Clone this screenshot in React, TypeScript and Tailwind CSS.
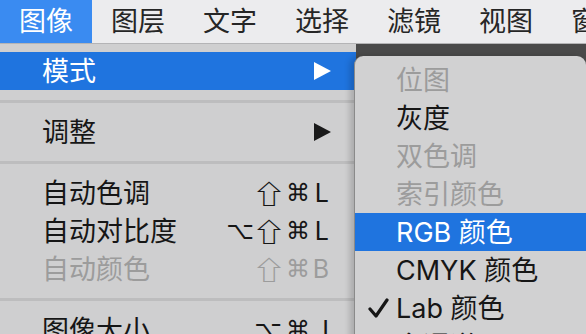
import React from 'react';

const cjk = "font-['Inter','Noto_Sans_CJK_SC',sans-serif]";
const sym = "font-['DejaVu_Sans','Noto_Sans_CJK_SC',sans-serif]";

const menuBar = ['图像', '图层', '文字', '选择', '滤镜', '视图', '窗口'];

type Item =
  | { type: 'sep' }
  | { type: 'item'; label: string; keys?: string[]; disabled?: boolean; active?: boolean; submenu?: boolean };

const mainItems: Item[] = [
  { type: 'item', label: '模式', submenu: true, active: true },
  { type: 'sep' },
  { type: 'item', label: '调整', submenu: true },
  { type: 'sep' },
  { type: 'item', label: '自动色调', keys: ['⇧', '⌘', 'L'] },
  { type: 'item', label: '自动对比度', keys: ['⌥', '⇧', '⌘', 'L'] },
  { type: 'item', label: '自动颜色', keys: ['⇧', '⌘', 'B'], disabled: true },
  { type: 'sep' },
  { type: 'item', label: '图像大小', keys: ['⌥', '⌘', 'I'] },
];

const modeItems = [
  { label: '位图', disabled: true },
  { label: '灰度' },
  { label: '双色调', disabled: true },
  { label: '索引颜色', disabled: true },
  { label: 'RGB 颜色', active: true },
  { label: 'CMYK 颜色' },
  { label: 'Lab 颜色', checked: true },
  { label: '多通道' },
];

function Arrow({ white }: { white?: boolean }) {
  return (
    <svg width="17" height="18" viewBox="0 0 17 18">
      <polygon points="0,0 17,9 0,18" fill={white ? '#ffffff' : '#1a1a1a'} />
    </svg>
  );
}

function Keys({ keys, disabled }: { keys: string[]; disabled?: boolean }) {
  return (
    <div className={`flex items-center leading-none ${sym} ${disabled ? 'text-[#9c9c9c]' : 'text-[#161616]'}`}>
      {keys.map((k, i) =>
        k === '⇧' ? (
          <span key={i} className="w-[28px] flex justify-center">
            <span className="inline-block scale-x-[1.35] text-[26px] font-['Noto_Sans_CJK_SC','DejaVu_Sans',sans-serif]">
              ⇧
            </span>
          </span>
        ) : k === '⌥' ? (
          <span key={i} className="w-[30px] text-center text-[24px]">⌥</span>
        ) : k === '⌘' ? (
          <span key={i} className="w-[24px] ml-[3px] text-center text-[24px]">⌘</span>
        ) : (
          <span key={i} className="w-[19px] text-right font-['Inter',sans-serif] text-[25px]">{k}</span>
        )
      )}
    </div>
  );
}

export default function App() {
  return (
    <div className={`relative w-[586px] h-[334px] overflow-hidden bg-[#4a4a4a] ${cjk}`}>
      {/* menu bar */}
      <div className="flex h-[44px] bg-[#ececee] border-b border-[#b4b4b6] whitespace-nowrap">
        {menuBar.map((m, i) => (
          <div
            key={m}
            className={`flex items-center px-[19px] text-[27px] leading-none ${
              i === 0 ? 'bg-[#3a8bf1] text-white' : 'text-[#262626]'
            }`}
          >
            {m}
          </div>
        ))}
      </div>

      {/* image menu */}
      <div className="absolute top-[44px] left-0 w-[356px] h-[300px] bg-[#cfcfd0] pt-[8px]">
        {mainItems.map((it, i) =>
          it.type === 'sep' ? (
            <div key={i} className="pt-[10px] pb-[10px]">
              <div className="h-[3px] bg-[#bdbdbe]" />
            </div>
          ) : (
            <div
              key={i}
              className={`flex items-center h-[38px] pl-[42px] pr-[27px] text-[27px] leading-none ${
                it.active ? 'bg-[#1f74df] text-white' : it.disabled ? 'text-[#9c9c9c]' : 'text-[#161616]'
              }`}
            >
              <span className="flex-1">{it.label}</span>
              {it.submenu && <span className="mr-[-2px]"><Arrow white={it.active} /></span>}
              {it.keys && <Keys keys={it.keys} disabled={it.disabled} />}
            </div>
          )
        )}
      </div>

      {/* mode submenu */}
      <div className="absolute top-[56px] left-[354px] w-[232px] h-[320px] bg-[#d1d1d2] rounded-t-[9px] border-l border-[#8a8a8a] shadow-[-4px_0_6px_rgba(0,0,0,0.18)] pt-[5px] overflow-hidden">
        {modeItems.map((it) => (
          <div
            key={it.label}
            className={`flex items-center h-[38px] text-[27px] leading-none whitespace-nowrap ${
              it.active ? 'bg-[#1f74df] text-white' : it.disabled ? 'text-[#9c9c9c]' : 'text-[#161616]'
            }`}
          >
            <span className="w-[41px] flex justify-end pr-[7px]">
              {it.checked && (
                <svg width="21" height="21" viewBox="0 0 21 21">
                  <polyline points="2,11 8,18 19,2" fill="none" stroke="#161616" strokeWidth="3.2" strokeLinecap="round" strokeLinejoin="round" />
                </svg>
              )}
            </span>
            <span>{it.label}</span>
          </div>
        ))}
      </div>
    </div>
  );
}
